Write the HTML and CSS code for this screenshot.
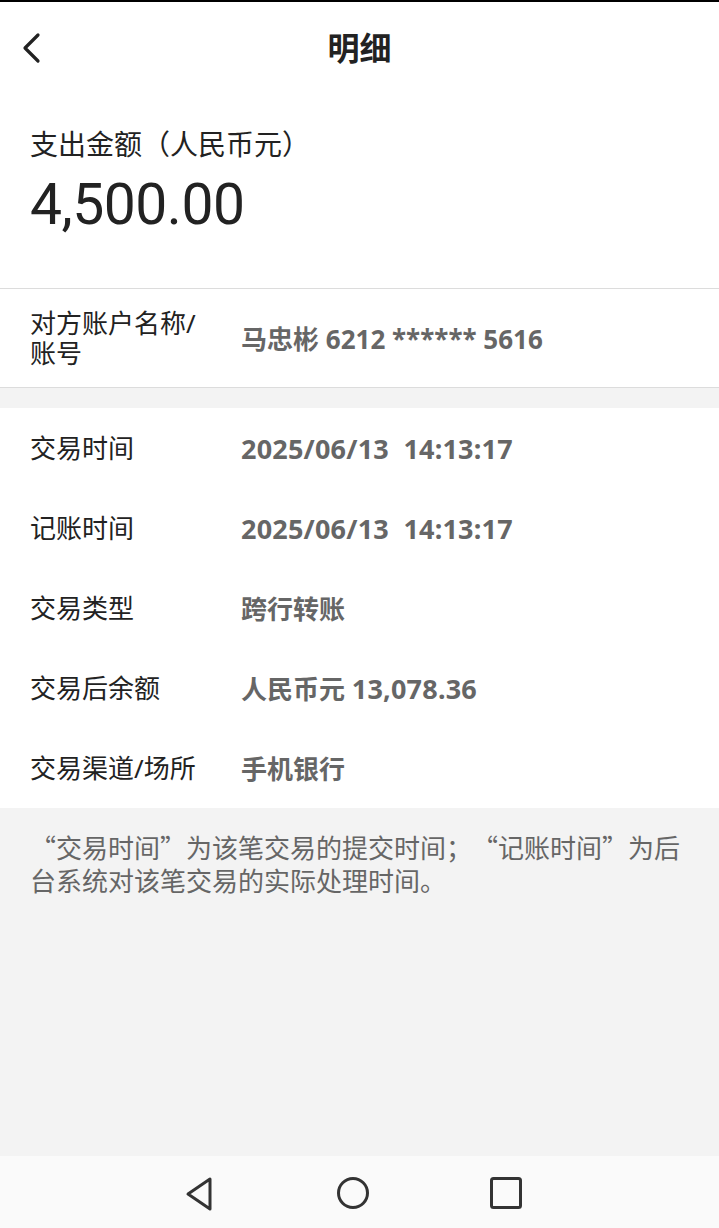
FILE: index.html
```html
<!DOCTYPE html>
<html lang="zh-CN">
  <head>
    <meta charset="utf-8" />
    <title>明细</title>
    <link rel="stylesheet" href="styles.css">
  </head>
  <body>
    <div class="screen">
      <header class="top-bar">
        <a href="#" class="back">
          <svg width="22" height="32" viewBox="0 0 22 32">
            <path d="M18 3 L5 16 L18 29" fill="none" stroke="#222" stroke-width="3.2" stroke-linecap="round" stroke-linejoin="round"/>
          </svg>
        </a>
        <h1>明细</h1>
      </header>

      <section class="amount">
        <p class="amount-label">支出金额（人民币元）</p>
        <p class="amount-value">4,500.00</p>
      </section>

      <section class="account">
        <div class="row account-row">
          <span class="label two-line"><span>对方账户名称/</span><span>账号</span></span>
          <span class="value">马忠彬 6212 ****** 5616</span>
        </div>
      </section>

      <section class="details">
        <div class="row">
          <span class="label">交易时间</span>
          <span class="value num">2025/06/13&nbsp;&nbsp;14:13:17</span>
        </div>
        <div class="row">
          <span class="label">记账时间</span>
          <span class="value num">2025/06/13&nbsp;&nbsp;14:13:17</span>
        </div>
        <div class="row">
          <span class="label">交易类型</span>
          <span class="value">跨行转账</span>
        </div>
        <div class="row">
          <span class="label">交易后余额</span>
          <span class="value">人民币元 <span class="num">13,078.36</span></span>
        </div>
        <div class="row">
          <span class="label">交易渠道/场所</span>
          <span class="value">手机银行</span>
        </div>
      </section>

      <p class="note">“交易时间”为该笔交易的提交时间；“记账时间”为后台系统对该笔交易的实际处理时间。</p>

      <nav class="sys-nav">
        <svg width="34" height="36" viewBox="0 0 34 36">
          <path d="M27 3 L27 33 L5 18 Z" fill="none" stroke="#333" stroke-width="3" stroke-linejoin="round"/>
        </svg>
        <svg width="34" height="36" viewBox="0 0 34 36">
          <circle cx="17" cy="17" r="14.5" fill="none" stroke="#333" stroke-width="3"/>
        </svg>
        <svg width="34" height="36" viewBox="0 0 34 36">
          <rect x="2.5" y="2.5" width="29" height="29" rx="2" fill="none" stroke="#333" stroke-width="3"/>
        </svg>
      </nav>
    </div>
  </body>
</html>
```

FILE: styles.css
```css
/* || Initial styles */

html {
  font-family: "Noto Sans", "Noto Sans CJK SC", sans-serif;
  color: #222;
}

* {
  box-sizing: border-box;
}

body {
  margin: 0;
}

p,
h1 {
  margin: 0;
}

/* || Screen */

.screen {
  width: 719px;
  height: 1228px;
  display: flex;
  flex-direction: column;
  background-color: #f3f3f3;
  border-top: 2px solid #000;
}

.top-bar {
  height: 93px;
  position: relative;
  display: flex;
  align-items: center;
  justify-content: center;
  background-color: #fff;
}

.top-bar .back {
  position: absolute;
  left: 20px;
  top: 30px;
  display: block;
  line-height: 0;
}

.top-bar h1 {
  font-size: 32px;
  font-weight: 700;
  margin-top: -6px;
}

/* || Amount */

.amount {
  height: 194px;
  padding: 26px 30px 0;
  background-color: #fff;
  border-bottom: 1px solid #dcdcdc;
}

.amount-label {
  font-family: "Noto Sans CJK SC", sans-serif;
  font-size: 28px;
  line-height: 44px;
  text-spacing-trim: space-all;
}

.amount-value {
  font-family: Roboto, "Noto Sans", sans-serif;
  font-size: 57px;
  line-height: 80px;
  letter-spacing: -0.5px;
}

/* || Rows */

.row {
  display: grid;
  grid-template-columns: 211px 1fr;
  align-items: center;
  padding: 0 30px;
  height: 80px;
}

.label {
  font-size: 26px;
  line-height: 31px;
}

.two-line {
  display: flex;
  flex-direction: column;
  gap: 1px;
  line-height: 29px;
}

.value {
  font-size: 26px;
  font-weight: 700;
  color: #666;
}

.num {
  font-size: 27px;
  letter-spacing: 0.2px;
}

.account {
  background-color: #fff;
  border-bottom: 1px solid #dcdcdc;
  margin-bottom: 20px;
}

.account-row {
  height: 98px;
}

.details {
  background-color: #fff;
}

/* || Note */

.note {
  flex: 1;
  padding: 22px 30px 0 30px;
  font-family: "Noto Sans CJK SC", sans-serif;
  font-size: 26px;
  line-height: 33px;
  color: #666;
  text-spacing-trim: space-all;
}

/* || System navigation */

.sys-nav {
  height: 72px;
  display: flex;
  align-items: center;
  justify-content: center;
  gap: 119px;
  padding-right: 14px;
  padding-top: 4px;
  background-color: #fafafa;
}
```
